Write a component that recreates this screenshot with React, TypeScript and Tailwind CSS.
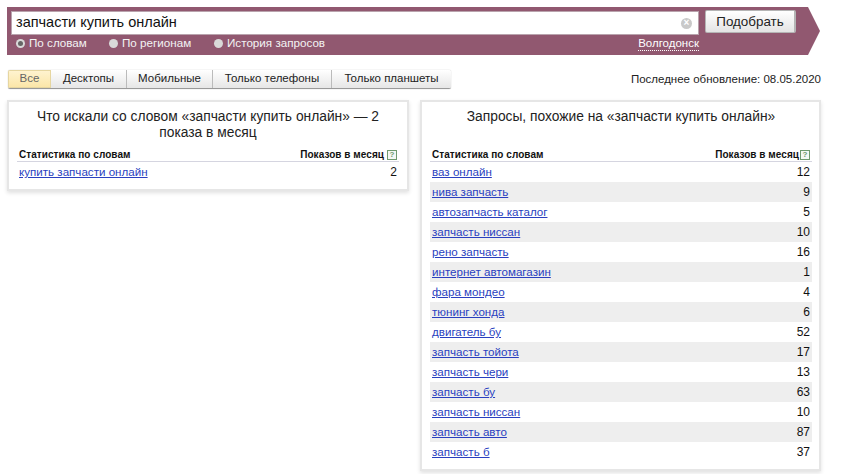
const similar: [string, number][] = [
  ["ваз онлайн", 12],
  ["нива запчасть", 9],
  ["автозапчасть каталог", 5],
  ["запчасть ниссан", 10],
  ["рено запчасть", 16],
  ["интернет автомагазин", 1],
  ["фара мондео", 4],
  ["тюнинг хонда", 6],
  ["двигатель бу", 52],
  ["запчасть тойота", 17],
  ["запчасть чери", 13],
  ["запчасть бу", 63],
  ["запчасть ниссан", 10],
  ["запчасть авто", 87],
  ["запчасть б", 37],
];

const tabs = [
  { label: "Десктопы", width: "w-[76px]" },
  { label: "Мобильные", width: "w-[86px]" },
  { label: "Только телефоны", width: "w-[119px]" },
  { label: "Только планшеты", width: "w-[119px]" },
];

function Radio({ label, active, className }: { label: string; active?: boolean; className: string }) {
  return (
    <div className={`flex items-center gap-[4px] ${className}`}>
      <span className="flex h-[9px] w-[9px] items-center justify-center rounded-full bg-[#d9d9d9]">
        {active && <span className="h-[5px] w-[5px] rounded-full bg-[#666]" />}
      </span>
      <span>{label}</span>
    </div>
  );
}

function TableHead({ gap }: { gap: string }) {
  return (
    <div className="flex h-[14px] items-center justify-between border-b border-[#d5d5e0] pl-[2px] pr-[2px] text-[10px] font-bold leading-[13px] tracking-[0.05px] text-[#111]">
      <span>Статистика по словам</span>
      <span className={`flex items-center ${gap}`}>
        Показов в месяц
        <span className="flex h-[10px] w-[10px] items-center justify-center border border-[#6f9a6f] bg-[#f4f8f4] text-[8px] font-bold leading-none tracking-normal text-[#6f9a6f]">
          ?
        </span>
      </span>
    </div>
  );
}

export default function App() {
  return (
    <div className="h-[474px] w-[865px] overflow-hidden bg-white pt-[7px] font-['Liberation_Sans',sans-serif] text-[#111]">
      {/* search band */}
      <div className="relative ml-[7px] h-[48px] w-[813px] bg-[#915870] [clip-path:polygon(0_0,801px_0,813px_50%,801px_100%,0_100%)]">
        <div className="flex items-start pl-[4px] pt-[4px]">
          <div className="flex h-[24px] w-[688px] items-center justify-between border border-[#b9a3ad] bg-white pl-[4px] pr-[6px] text-[14.5px]">
            <span>запчасти купить онлайн</span>
            <span className="flex h-[11px] w-[11px] items-center justify-center rounded-full bg-[#c9c9c9] text-[10px] font-bold leading-none text-white">
              ×
            </span>
          </div>
          <button className="ml-[6px] mt-[-1px] h-[23px] w-[91px] rounded-[2px] border border-r-2 border-[#b5b5b5] bg-gradient-to-b from-white to-[#e4e4e4] text-[13.4px] leading-none text-[#222]">
            Подобрать
          </button>
        </div>
        <div className="flex h-[16px] items-center pl-[9px] pr-[121px] text-[11.65px] text-[#f3f3f3]">
          <Radio label="По словам" active className="w-[93px]" />
          <Radio label="По регионам" className="w-[105px]" />
          <Radio label="История запросов" className="" />
          <span className="ml-auto mt-[1px] border-b border-dotted border-white text-[11.5px] font-normal leading-[13px] text-white">
            Волгодонск
          </span>
        </div>
      </div>

      {/* tabs */}
      <div className="ml-[8px] mt-[15px] flex h-[19px] w-[813px] items-center justify-between text-[11.5px]">
        <div className="flex h-[19px] overflow-hidden rounded-[2px] border-b border-[#999] shadow-[0_0_1px_rgba(0,0,0,0.35)]">
          <div className="flex w-[43px] items-center justify-center border border-[#e6d6a0] bg-gradient-to-b from-[#fff3cf] to-[#fbe6a8] text-[#666]">
            Все
          </div>
          {tabs.map((t) => (
            <div
              key={t.label}
              className={`flex items-center justify-center border-r border-[#bbb] bg-gradient-to-b from-white to-[#e6e6e6] text-[#222] last:border-r-0 ${t.width}`}
            >
              {t.label}
            </div>
          ))}
        </div>
        <span className="text-[#222]">Последнее обновление: 08.05.2020</span>
      </div>

      {/* cards */}
      <div className="ml-[7px] mt-[11px] flex items-start gap-[11px]">
        <section className="h-[91px] w-[402px] border-2 border-[#e6e6e6] bg-white pl-[8px] pr-[8px] pt-[7px] shadow-[0_2px_4px_rgba(0,0,0,0.12)]">
          <h2 className="text-center text-[13.8px] font-normal leading-[16px] text-[#222]">
            Что искали со словом «запчасти купить онлайн» — 2 показа в месяц
          </h2>
          <div className="mt-[7px]">
            <TableHead gap="gap-[3px]" />
          </div>
          <div className="flex h-[20px] items-center justify-between pl-[2px] pr-[2px] text-[11.6px]">
            <a className="text-[#2a3fc0] underline">купить запчасти онлайн</a>
            <span className="text-[12px]">2</span>
          </div>
        </section>

        <section className="h-[371px] w-[401px] border-2 border-[#e6e6e6] bg-white pl-[8px] pr-[7px] pt-[7px] shadow-[0_2px_4px_rgba(0,0,0,0.12)]">
          <h2 className="h-[39px] text-center text-[13.8px] font-normal leading-[16px] text-[#222]">
            Запросы, похожие на «запчасти купить онлайн»
          </h2>
          <TableHead gap="gap-[1px]" />
          <div>
            {similar.map(([q, n], i) => (
              <div
                key={i}
                className="flex h-[20px] items-center justify-between pl-[2px] pr-[2px] text-[11.6px] even:bg-[#eeeeee]"
              >
                <a className="text-[#2a3fc0] underline">{q}</a>
                <span className="text-[12px]">{n}</span>
              </div>
            ))}
          </div>
        </section>
      </div>
    </div>
  );
}
